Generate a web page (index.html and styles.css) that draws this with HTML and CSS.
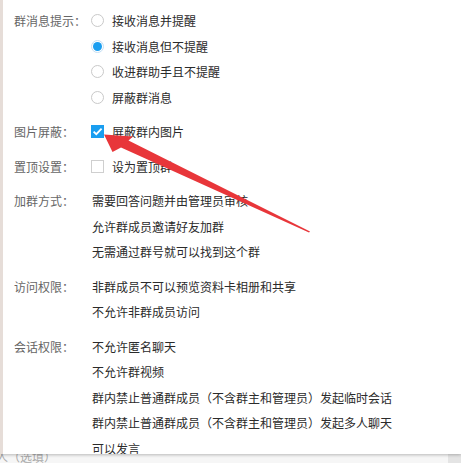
FILE: index.html
```html
<!DOCTYPE html>
<html lang="zh-CN">
<head>
<meta charset="utf-8">
<link rel="stylesheet" href="styles.css">
</head>
<body>
<div class="panel">
  <div class="group">
    <div class="label">群消息提示：</div>
    <div class="values">
      <div class="line"><span class="radio"></span>接收消息并提醒</div>
      <div class="line"><span class="radio on"></span>接收消息但不提醒</div>
      <div class="line"><span class="radio"></span>收进群助手且不提醒</div>
      <div class="line"><span class="radio"></span>屏蔽群消息</div>
    </div>
  </div>
  <div class="group">
    <div class="label">图片屏蔽：</div>
    <div class="values">
      <div class="line"><span class="check on"><svg viewBox="0 0 13 13" width="13" height="13"><path d="M2.6 6.6 L5.3 9.2 L10.6 3.6" fill="none" stroke="#fff" stroke-width="1.8"/></svg></span>屏蔽群内图片</div>
    </div>
  </div>
  <div class="group">
    <div class="label">置顶设置：</div>
    <div class="values">
      <div class="line"><span class="check"></span>设为置顶群</div>
    </div>
  </div>
  <div class="group">
    <div class="label">加群方式：</div>
    <div class="values">
      <div class="line">需要回答问题并由管理员审核</div>
      <div class="line">允许群成员邀请好友加群</div>
      <div class="line">无需通过群号就可以找到这个群</div>
    </div>
  </div>
  <div class="group">
    <div class="label">访问权限：</div>
    <div class="values">
      <div class="line">非群成员不可以预览资料卡相册和共享</div>
      <div class="line">不允许非群成员访问</div>
    </div>
  </div>
  <div class="group">
    <div class="label">会话权限：</div>
    <div class="values">
      <div class="line">不允许匿名聊天</div>
      <div class="line">不允许群视频</div>
      <div class="line">群内禁止普通群成员（不含群主和管理员）发起临时会话</div>
      <div class="line">群内禁止普通群成员（不含群主和管理员）发起多人聊天</div>
      <div class="line">可以发言</div>
    </div>
  </div>
</div>
<div class="below">
  <span class="below-text">人（选填）</span>
  <span class="scroll"></span>
</div>
<svg class="arrow" width="461" height="463" viewBox="0 0 461 463">
  <polygon points="104,134.5 133,136.5 128.5,140.5 310,231.5 309,232.5 121,147.5 112.5,152" fill="#e8363a"/>
</svg>
</body>
</html>
```
FILE: styles.css
```css
html, body {
  margin: 0;
  padding: 0;
}
body {
  width: 461px;
  height: 463px;
  overflow: hidden;
  position: relative;
  background: #f6f6f6;
  font-family: "Noto Sans CJK SC", "Noto Sans", sans-serif;
  font-size: 12px;
}
.panel {
  position: relative;
  z-index: 1;
  box-sizing: border-box;
  height: 454px;
  overflow: hidden;
  background: #fff;
  border-left: 3px solid #e6ddd8;
  padding: 8px 0 0 11px;
  box-shadow: 0 1px 3px rgba(0, 0, 0, 0.25);
}
.group {
  display: flex;
  margin-bottom: 9px;
}
.label {
  flex: none;
  width: 78px;
  color: #666;
  line-height: 25.5px;
}
.values {
  display: flex;
  flex-direction: column;
}
.line {
  display: flex;
  align-items: center;
  height: 25.5px;
  color: #2b2b2b;
  white-space: nowrap;
}
.radio {
  flex: none;
  box-sizing: border-box;
  width: 13px;
  height: 13px;
  margin: 0 8px 0 -1px;
  border: 1px solid #c9c9c9;
  border-radius: 50%;
  background: #fff;
  display: flex;
  align-items: center;
  justify-content: center;
}
.radio.on {
  border-color: #c5dff3;
}
.radio.on::after {
  content: "";
  width: 9px;
  height: 9px;
  border-radius: 50%;
  background: #1a9ef0;
}
.check {
  flex: none;
  box-sizing: border-box;
  width: 13px;
  height: 13px;
  margin: 0 8px 0 -1px;
  border: 1px solid #cfcfcf;
  background: #fff;
  display: flex;
}
.check.on {
  border: none;
  background: #1a9ef0;
}
.below {
  display: flex;
  justify-content: space-between;
  height: 9px;
  overflow: hidden;
}
.below-text {
  margin: -4px 0 0 -4px;
  color: #aaa;
  line-height: 14px;
}
.scroll {
  width: 13px;
  background: #e4e4e4;
}
.arrow {
  position: absolute;
  top: 0;
  left: 0;
  z-index: 2;
  pointer-events: none;
}
```
